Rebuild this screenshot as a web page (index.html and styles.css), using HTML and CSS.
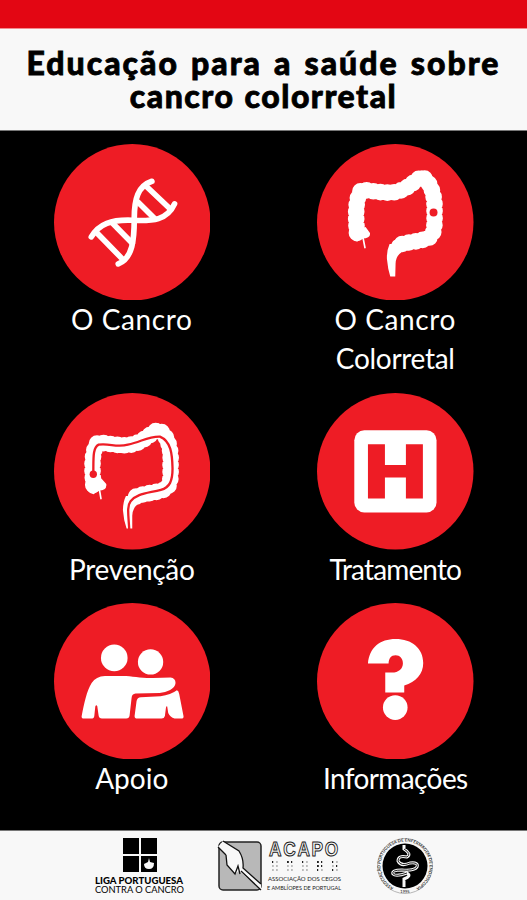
FILE: index.html
```html
<!DOCTYPE html>
<html lang="pt">
<head>
    <meta charset="UTF-8">
    <meta name="viewport" content="width=device-width, initial-scale=1.0">
    <title>Educação para a saúde sobre cancro colorretal</title>
    <link rel="stylesheet" href="styles.css">
</head>
<body>
    <div class="status-bar"></div>

    <header class="header">
        <h1><span class="title-top">Educação para a saúde sobre</span><br><span class="title-bottom">cancro colorretal</span></h1>
    </header>

    <main class="menu">
        <a class="item">
            <svg class="icon" viewBox="24 25 470 470">
                <circle class="disc" cx="259" cy="260" r="235"/>
                <g class="line dna">
                    <path d="M318 137C276 151 265 190 265 249C265 310 261 368 217 385"/>
                    <path d="M136 304C160 264 196 252 258 254C322 257 364 254 386 205"/>
                    <path d="M151 290L229 370M200 263L259 323M276 199L326 249M301 152L374 221"/>
                </g>
            </svg>
            <span class="label cancro">O Cancro</span>
        </a>

        <a class="item">
            <svg class="icon" viewBox="22 25 470 470">
                <circle class="disc" cx="257" cy="260" r="235"/>
                <g class="line">
                    <path class="colon" d="M142 292C138 240 137 190 155 163C205 166 242 181 282 161C304 150 319 133 336 124C363 133 377 182 375 225C375 271 378 302 350 310C318 320 290 319 264 330"/>
                    <path class="bumps" d="M142 292C138 240 137 190 155 163C205 166 242 181 282 161C304 150 319 133 336 124C363 133 377 182 375 225C375 271 378 302 350 310C318 320 290 319 264 330"/>
                    <path class="appendix" d="M159 300L166 336"/>
                </g>
                <path class="fill" d="M240 325Q231 345 232 370L236 400L242 423H257L258 385Q258 362 276 350L280 325ZM122 285Q121 315 143 318L158 309Q184 308 181 292L168 274Z"/>
                <circle class="disc" cx="372" cy="231" r="12"/>
            </svg>
            <span class="label cancro">O Cancro</span>
            <span class="label colorretal">Colorretal</span>
        </a>

        <a class="item">
            <svg class="icon" viewBox="24 23 470 470">
                <circle class="disc" cx="259" cy="258" r="235"/>
                <g class="line">
                    <path class="colon" d="M142 299C138 245 137 199 155 172C205 175 242 190 282 169C304 158 319 142 336 134C363 142 377 190 374 232C374 278 378 306 350 315C318 325 290 324 264 337"/>
                    <path class="bumps" d="M142 299C138 245 137 199 155 172C205 175 242 190 282 169C304 158 319 142 336 134C363 142 377 190 374 232C374 278 378 306 350 315C318 325 290 324 264 337"/>
                    <path class="appendix" d="M159 305L165 340"/>
                </g>
                <path class="fill" d="M240 332Q231 350 231 375L235 405L242 430H259L259 392Q260 368 276 356L280 332ZM120 290Q120 324 143 327L158 316Q184 315 181 296L165 278Z"/>
                <path class="tube" d="M142 266C143 224 139 187 158 178C192 173 211 188 246 178C286 170 305 153 342 154C375 168 379 204 380 250C380 286 372 307 345 314C300 325 273 325 254 348C242 363 248 392 250 434"/>
                <circle class="disc" cx="142" cy="267" r="11"/>
            </svg>
            <span class="label prevencao">Prevenção</span>
        </a>

        <a class="item">
            <svg class="icon" viewBox="22 23 470 470">
                <circle class="disc" cx="257" cy="258" r="235"/>
                <rect class="fill" x="134" y="135" width="247" height="247" rx="30"/>
                <path class="disc" d="M175 177H226V239H289V177H340V340H289V277H226V340H175Z"/>
            </svg>
            <span class="label tratamento">Tratamento</span>
        </a>

        <a class="item">
            <svg class="icon" viewBox="24 21 470 470">
                <circle class="disc" cx="259" cy="256" r="235"/>
                <circle class="fill" cx="205" cy="186" r="40"/>
                <circle class="fill" cx="314" cy="198" r="38"/>
                <path class="fill" d="M107 361C115 321 122 285 137 261Q150 241 177 240H230C260 240 286 247 322 246L374 245Q389 247 389 261C388 279 363 289 341 291L269 293Q258 294 257 306L251 359Q250 368 241 368H168Q159 368 158 359L154 331Q151 325 148 332L145 360Q144 368 136 368H114Q106 368 107 361Z"/>
                <path class="fill" d="M272 315Q274 305 285 304L344 301Q375 297 393 283Q398 284 400 294L413 361Q414 368 406 368H386Q373 364 367 351L364 332Q361 329 360 337L357 360Q355 368 347 368H274Q266 368 266 360Z"/>
            </svg>
            <span class="label apoio">Apoio</span>
        </a>

        <a class="item">
            <svg class="icon" viewBox="22 21 470 470">
                <circle class="disc" cx="257" cy="256" r="235"/>
                <path class="fill" d="M175 203C179 155 211 129 258 129C307 129 341 157 341 201C341 234 319 258 284 269V290H227V230H247C267 230 280 219 280 202C280 188 271 178 258 178C244 178 237 188 237 203Z"/>
                <circle class="fill" cx="257" cy="335" r="37"/>
            </svg>
            <span class="label informacoes">Informações</span>
        </a>
    </main>

    <footer class="footer">
        <svg class="logo-liga" viewBox="0 0 92 60">
            <path d="M29 0H45V16H29ZM47 0H63V16H47ZM29 18H45V34H29ZM47 18H63V34H47Z"/>
            <path class="flame" d="M55 20L56 24L60 25Q60 31 55 31Q50 31 50 26L54 24Z"/>
            <text class="liga-name" x="1" y="46" textLength="88" lengthAdjust="spacingAndGlyphs">LIGA PORTUGUESA</text>
            <text class="liga-sub" x="1" y="55" textLength="89" lengthAdjust="spacingAndGlyphs">CONTRA O CANCRO</text>
        </svg>

        <svg class="logo-acapo" viewBox="0 0 126 60">
            <rect class="acapo-box" x="2" y="4" width="42" height="48" rx="4"/>
            <path class="acapo-hand" d="M1 9L6 3L22 13Q27 21 26 30L44 46V52L22 33L18 36L10 27L9 17Z"/>
            <path class="acapo-cane" d="M9 17L1 9M6 3L22 13Q27 21 26 30L44 46M24 33L44 52M9 17L10 27L18 36L21 28L23 36"/>
            <text class="acapo-name" x="52" y="18" textLength="71" lengthAdjust="spacingAndGlyphs">ACAPO</text>
            <g class="braille">
                <path class="pale" d="M55 24h8M55 28h8M55 32h8M70 24h8M70 28h8M70 32h8M85 24h8M85 28h8M85 32h8M100 24h8M100 28h8M100 32h8M115 24h8M115 28h8M115 32h8"/>
                <path d="M55 24h1M70 24h5M85 24h1M100 24h5M100 28h5M100 32h1M115 24h1M119 28h1M115 32h1"/>
            </g>
            <text class="acapo-sub" x="51" y="43" textLength="73" lengthAdjust="spacingAndGlyphs">ASSOCIAÇÃO DOS CEGOS</text>
            <text class="acapo-sub" x="50" y="51.500" textLength="74" lengthAdjust="spacingAndGlyphs">E AMBLÍOPES DE PORTUGAL</text>
        </svg>

        <svg class="logo-seal" viewBox="0 0 58 58">
            <defs>
                <path id="ring" d="M29 53.500A24.500 24.500 0 1 1 29.100 53.500"/>
            </defs>
            <circle class="seal-edge" cx="29" cy="29" r="27.500"/>
            <circle cx="29" cy="29" r="22.500"/>
            <text class="seal-text"><textPath href="#ring" startOffset="12" textLength="130">ASSOCIAÇÃO PORTUGUESA DE ENFERMAGEM DE ENDOSCOPIA</textPath></text>
            <text class="seal-year" x="29" y="55.500" text-anchor="middle">1995</text>
            <path class="gut" d="M28 8V12Q36 17 31 20Q22 18 22 24Q25 30 34 26Q43 25 41 30Q38 34 26 33Q15 33 17 37Q20 40 31 36Q36 39 28 42V50"/>
            <path class="gut-core" d="M28 12Q36 17 31 20Q22 18 22 24Q25 30 34 26Q43 25 41 30Q38 34 26 33Q15 33 17 37Q20 40 31 36"/>
        </svg>
    </footer>
</body>
</html>
```
FILE: styles.css
```css
* {
    margin: 0;
    padding: 0;
    box-sizing: border-box;
}

body {
    width: 527px;
    height: 900px;
    display: flex;
    flex-direction: column;
    overflow: hidden;
    background: #000;
    font-family: Lato, "Liberation Sans", sans-serif;
}

.status-bar {
    height: 28px;
    background: #e30613;
}

.header {
    height: 103px;
    padding-top: 17px;
    background: #f8f8f8;
    border-top: 1px solid #f28a8f;
    border-bottom: 1px solid #777;
    text-align: center;
}

.header h1 {
    font-size: 32px;
    font-weight: 900;
    line-height: 33px;
    white-space: nowrap;
    color: #000;
    -webkit-text-stroke: 0.8px #000;
}

.title-top {
    letter-spacing: 2px;
    word-spacing: 2.5px;
}

.title-bottom {
    letter-spacing: 1.5px;
    word-spacing: 1px;
}

.menu {
    flex: 1;
    display: grid;
    grid-template-columns: 1fr 1fr;
    grid-auto-rows: max-content;
    row-gap: 13px;
    padding-top: 12.5px;
}

.item {
    display: flex;
    flex-direction: column;
    align-items: center;
}

.icon {
    width: 156.5px;
    height: 156.5px;
}

.disc { fill: #ee1c25; }
.fill { fill: #fff; }

.line {
    fill: none;
    stroke: #fff;
    stroke-linecap: round;
    stroke-linejoin: round;
}

.dna { stroke-width: 17; }
.colon { stroke-width: 38; }

/* round dots along the colon give the lumpy outline */
.bumps {
    stroke-width: 50;
    stroke-dasharray: 0 21;
}

.appendix { stroke-width: 5; }

.tube {
    fill: none;
    stroke: #ee1c25;
    stroke-width: 7;
}

.label {
    color: #fff;
    font-size: 28px;
    line-height: 39px;
    white-space: nowrap;
}

.label:last-child { margin-bottom: 1px; }

.colorretal { padding-bottom: 1px; }

.cancro { letter-spacing: 0.6px; }
.colorretal { letter-spacing: -0.3px; }
.prevencao { letter-spacing: -0.3px; }
.tratamento { letter-spacing: -0.85px; }
.informacoes { letter-spacing: -0.6px; }

.footer {
    height: 70px;
    display: flex;
    align-items: flex-start;
    padding: 7px 0 0 94px;
    background: #f8f8f8;
    border-top: 1px solid #777;
}

.logo-liga {
    width: 92px;
    height: 60px;
}

.logo-acapo {
    width: 126px;
    height: 60px;
    margin-left: 31px;
}

.logo-seal {
    width: 58px;
    height: 58px;
    margin: -1px 0 0 33px;
}

.flame { fill: #f8f8f8; }

.liga-name {
    font-size: 8.5px;
    font-weight: 900;
}

.liga-sub { font-size: 8.5px; }

.acapo-box {
    fill: #b8b8b8;
    stroke: #222;
    stroke-width: 1.5;
}

.acapo-hand { fill: #f8f8f8; }

.acapo-cane {
    fill: none;
    stroke: #111;
    stroke-width: 1.3;
}

.acapo-name {
    font-family: "Liberation Sans", sans-serif;
    font-size: 20px;
    font-weight: 700;
    letter-spacing: 2px;
    fill: #f8f8f8;
    stroke: #222;
    stroke-width: 1;
}

.braille path {
    fill: none;
    stroke: #222;
    stroke-width: 1.8;
    stroke-dasharray: 1.8 2.2;
}

.braille .pale { stroke: #bbb; }

.acapo-sub {
    font-size: 5.5px;
    fill: #222;
}

.seal-edge {
    fill: #f8f8f8;
    stroke: #999;
    stroke-width: 0.7;
}

.seal-text {
    font-size: 4.2px;
    font-weight: 700;
    fill: #333;
}

.seal-year { font-size: 4px; }

.gut {
    fill: none;
    stroke: #f8f8f8;
    stroke-width: 3;
}

.gut-core {
    fill: none;
    stroke: #222;
    stroke-width: 1;
}
```
